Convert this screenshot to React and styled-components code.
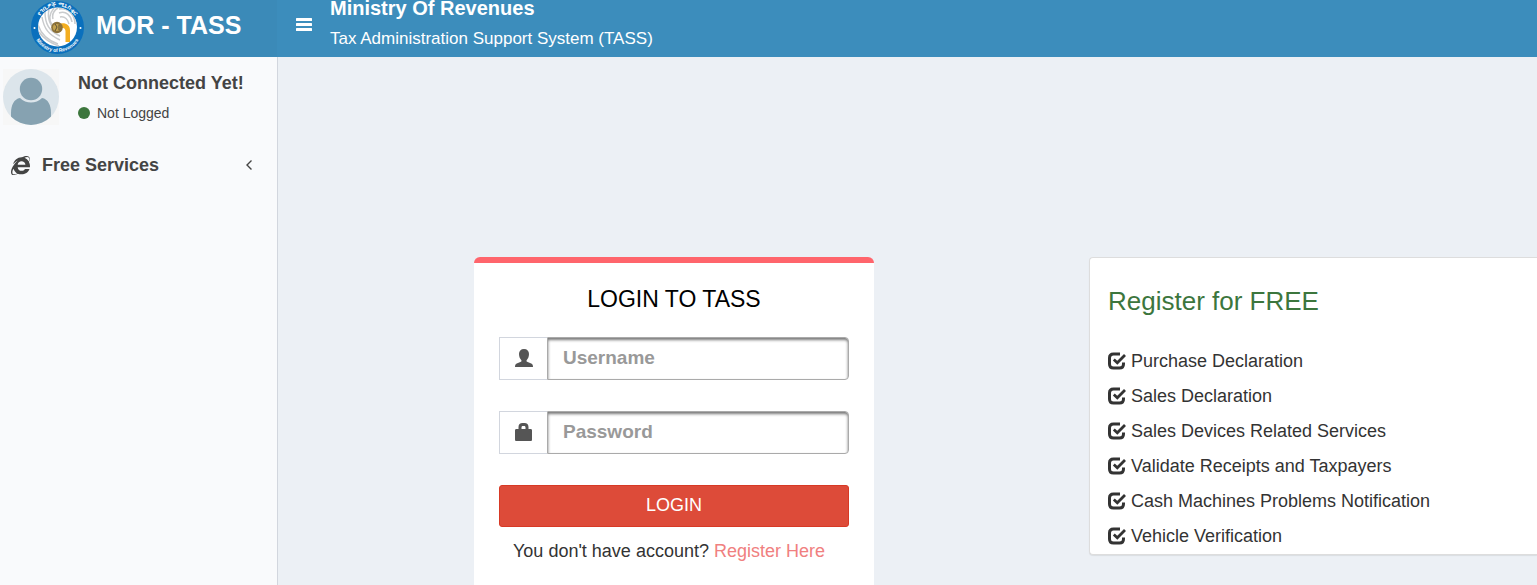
import React from "react";
import styled, { createGlobalStyle } from "styled-components";
import { FaInternetExplorer } from "react-icons/fa";

const GlobalStyle = createGlobalStyle`
  *, *::before, *::after { box-sizing: border-box; }
  body {
    margin: 0;
    font-family: "Liberation Sans", Arial, sans-serif;
    font-size: 18px;
    color: #333;
    background: #ecf0f5;
  }
  h1, h2, p, ul { margin: 0; padding: 0; font-weight: 400; }
  a { text-decoration: none; }
`;

const Page = styled.div`
  display: flex;
  flex-direction: column;
  min-height: 100vh;
`;

const Header = styled.header`
  display: flex;
  height: 57px;
  background: #3c8dbc;
  color: #fff;
`;

const Brand = styled.a`
  display: flex;
  align-items: center;
  gap: 11px;
  flex: 0 0 277px;
  padding: 0 0 3px 30px;
  background: #3b8ab8;
  color: #fff;
  font-size: 25px;
  font-weight: 700;
`;

const BrandName = styled.span`
  padding-bottom: 4px;
`;

const MenuButton = styled.button`
  display: flex;
  align-items: center;
  height: 48px;
  padding: 0 18px 0 19px;
  border: 0;
  background: none;
  color: #fff;
  cursor: pointer;
`;

const Heading = styled.div`
  display: flex;
  flex-direction: column;
  gap: 8px;
`;

const Ministry = styled.h1`
  font-size: 20px;
  line-height: 16px;
  font-weight: 700;
`;

const SystemName = styled.p`
  font-size: 17px;
  line-height: 30px;
`;

const Body = styled.div`
  display: flex;
  flex: 1;
`;

const Sidebar = styled.aside`
  flex: 0 0 278px;
  background: #f9fafc;
  border-right: 1px solid #d2d6de;
  color: #444;
`;

const UserPanel = styled.div`
  display: flex;
  gap: 19px;
  padding: 12px 3px 8px;
`;

const UserName = styled.p`
  font-weight: 700;
  line-height: 28px;
`;

const Status = styled.p`
  display: flex;
  align-items: center;
  gap: 7px;
  font-size: 14px;
  line-height: 32px;

  &::before {
    content: "";
    width: 12px;
    height: 12px;
    border-radius: 50%;
    background: #3c763d;
  }
`;

const MenuItem = styled.a`
  display: flex;
  align-items: center;
  gap: 12px;
  padding: 12px 24px 12px 11px;
  color: #444;
  font-weight: 700;
  line-height: 32px;

  & > span { flex: 1; }
`;

const Main = styled.main`
  flex: 1;
  display: grid;
  grid-template-columns: minmax(0, 1fr) 448px;
  column-gap: 19px;
  align-items: start;
  padding-top: 200px;
`;

const LoginCard = styled.form`
  width: 100%;
  max-width: 400px;
  justify-self: center;
  padding: 20px 25px 32px;
  border-top: 6px solid #ff656c;
  border-radius: 6px;
  background: #fff;
`;

const LoginTitle = styled.h2`
  margin-bottom: 22px;
  font-size: 23px;
  line-height: 32px;
  text-align: center;
  color: #000;
`;

const Field = styled.div`
  display: flex;
  height: 43px;
  margin-bottom: 31px;
`;

const Addon = styled.label`
  display: flex;
  align-items: center;
  justify-content: center;
  flex: 0 0 48px;
  padding-bottom: 2px;
  border: 1px solid #d2d6de;
  border-right: 0;
  color: #555;
`;

const Input = styled.input`
  flex: 1;
  min-width: 0;
  padding: 0 15px 2px;
  border: 1px solid #aaa;
  border-radius: 0 4px 4px 0;
  background: #fff;
  box-shadow: inset 0 2px 3px #777;
  font: 700 19px "Liberation Sans", Arial, sans-serif;
  color: #555;

  &::placeholder { color: #999; opacity: 1; }
`;

const LoginButton = styled.button`
  display: block;
  width: 100%;
  height: 42px;
  padding: 0 0 2px;
  border: 1px solid #d73925;
  border-radius: 3px;
  background: #dd4b39;
  color: #fff;
  font: 400 18px "Liberation Sans", Arial, sans-serif;
  cursor: pointer;
`;

const SignupLine = styled.p`
  padding: 8px 10px 0 0;
  line-height: 32px;
  text-align: center;

  a { color: #f08080; }
`;

const RegisterCard = styled.section`
  padding: 24px 18px 0;
  border: 1px solid #ddd;
  border-right: 0;
  border-radius: 4px 0 0 4px;
  background: #fff;
  box-shadow: 0 1px 1px rgba(0, 0, 0, 0.08);
`;

const RegisterTitle = styled.h2`
  margin-bottom: 24px;
  font-size: 26px;
  line-height: 38px;
  color: #3c763d;
`;

const ServiceList = styled.ul`
  list-style: none;
`;

const Service = styled.li`
  display: flex;
  align-items: center;
  gap: 5px;
  line-height: 35px;

  & > svg { margin-bottom: 2px; }
`;

const Logo = () => (
  <svg width="55" height="55" viewBox="0 0 55 55" aria-hidden="true">
    <defs>
      <path id="ringTop" d="M6.500 27.500a21 21 0 0 1 42 0" />
      <path id="ringBottom" d="M3 27.500a24.500 24.500 0 0 0 49 0" />
      <clipPath id="disc"><circle cx="27.5" cy="27" r="19.5" /></clipPath>
    </defs>
    <circle cx="27.5" cy="27.5" r="26.5" fill="#0a70bd" />
    <circle cx="27.5" cy="27" r="19.5" fill="#fff" />
    <g clipPath="url(#disc)" fill="none" stroke="#c9cbcd" strokeWidth="1.5">
      <path d="M12 17c2 12 7 18 18 23M15 12c0 12 4 19 15 24M19 9c-2 10 1 17 8 22M24 8c-5 6-5 12-2 17" />
      <path d="M8 25c3 9 9 15 20 19M28 8c-5 3-6 7-5 11M29 13c7-3 12 3 13 9M29 9c10-2 16 7 16 15M30 17c5-1 8 3 9 7" />
      <path d="M9 32c5 7 11 11 20 14M33 7c8 2 14 10 14 18" />
    </g>
    <path d="M29 24c5-2 11 0 11 6v12h-4.500V31c0-3-3-4-6.500-3z" fill="#f3ae20" />
    <circle cx="27" cy="27.5" r="5.8" fill="#8b713a" />
    <circle cx="26.5" cy="27.5" r="3.6" fill="#c3a34f" />
    <path d="M25 24l2 3-2 4M29 25v5" stroke="#5d5038" strokeWidth="1" fill="none" />
    <circle cx="4.500" cy="28" r="1" fill="#fff" />
    <circle cx="50.500" cy="28" r="1" fill="#fff" />
    <text fill="#fff" fontSize="6" fontWeight="700" textAnchor="middle">
      <textPath href="#ringTop" startOffset="50%">የገቢዎች ሚኒስቴር</textPath>
    </text>
    <text fill="#fff" fontSize="5" fontWeight="700" textAnchor="middle" fontFamily="Liberation Sans">
      <textPath href="#ringBottom" startOffset="50%">Ministry of Revenues</textPath>
    </text>
  </svg>
);

const BarsIcon = () => (
  <svg width="16" height="13" viewBox="0 0 16 13" fill="currentColor" aria-hidden="true">
    <rect width="16" height="3" rx="0.5" />
    <rect y="5" width="16" height="3" rx="0.5" />
    <rect y="10" width="16" height="3" rx="0.5" />
  </svg>
);

const Avatar = () => (
  <svg width="56" height="56" viewBox="0 0 56 56" aria-hidden="true">
    <defs><clipPath id="avatarDisc"><circle cx="28" cy="28" r="28" /></clipPath></defs>
    <rect width="56" height="56" fill="#f7f7f7" />
    <circle cx="28" cy="28" r="28" fill="#dce5eb" />
    <g clipPath="url(#avatarDisc)" fill="#86a2b1">
      <circle cx="28" cy="20" r="11.2" />
      <path d="M8 56V44c0-8 3-14 9-15 3 3 7 4.500 11 4.500S36 32 39 29c6 1 9 7 9 15v12z" />
    </g>
  </svg>
);

const AngleLeft = () => (
  <svg width="8" height="12" viewBox="0 0 8 12" fill="none" stroke="currentColor" strokeWidth="1.4" aria-hidden="true">
    <path d="M6.500 1.500 2 6l4.500 4.500" />
  </svg>
);

const UserIcon = () => (
  <svg width="18" height="18" viewBox="0 0 18 18" fill="currentColor" aria-hidden="true">
    <path d="M9 0c3.200 0 5 2 5 5 0 2.600-.9 4.600-2.200 5.900-.5.500-.4 1.500.3 1.800l4.100 1.800c1.300.6 1.800 1.500 1.800 3.500H0c0-2 .5-2.900 1.800-3.500l4.100-1.800c.7-.3.800-1.300.3-1.800C4.900 9.600 4 7.600 4 5c0-3 1.800-5 5-5z" />
  </svg>
);

const LockIcon = () => (
  <svg width="18" height="18" viewBox="0 0 18 18" fill="currentColor" aria-hidden="true">
    <path fillRule="evenodd" d="M3.500 6V4c0-2.500 1.500-4 4-4h2c2.500 0 4 1.500 4 4v2H15.500c1 0 1.500.5 1.500 1.500V16.500c0 1-.5 1.500-1.500 1.500h-14C.5 18 0 17.500 0 16.500V7.500C0 6.500.5 6 1.500 6zm3 0h4V4.500C10.500 3.500 10 3 9.200 3H7.800C7 3 6.500 3.500 6.500 4.500z" />
  </svg>
);

const CheckIcon = () => (
  <svg width="18" height="18" viewBox="0 0 18 18" fill="none" stroke="currentColor" aria-hidden="true">
    <path d="M12 2H5.500C3 2 1.500 3.500 1.500 6v6c0 2.500 1.500 4 4 4h6c2.500 0 4-1.500 4-4v-1.500" strokeWidth="3" />
    <path d="M5.800 7.500 9.300 10.700 17 3" strokeWidth="2.800" />
  </svg>
);

const services = [
  "Purchase Declaration",
  "Sales Declaration",
  "Sales Devices Related Services",
  "Validate Receipts and Taxpayers",
  "Cash Machines Problems Notification",
  "Vehicle Verification",
];

export default function App() {
  return (
    <Page>
      <GlobalStyle />
      <Header>
        <Brand href="#"><Logo /><BrandName>MOR - TASS</BrandName></Brand>
        <MenuButton type="button" aria-label="Toggle navigation"><BarsIcon /></MenuButton>
        <Heading>
          <Ministry>Ministry Of Revenues</Ministry>
          <SystemName>Tax Administration Support System (TASS)</SystemName>
        </Heading>
      </Header>
      <Body>
        <Sidebar>
          <UserPanel>
            <Avatar />
            <div>
              <UserName>Not Connected Yet!</UserName>
              <Status>Not Logged</Status>
            </div>
          </UserPanel>
          <nav>
            <MenuItem href="#">
              <FaInternetExplorer size={19} />
              <span>Free Services</span>
              <AngleLeft />
            </MenuItem>
          </nav>
        </Sidebar>
        <Main>
          <LoginCard onSubmit={(e) => e.preventDefault()}>
            <LoginTitle>LOGIN TO TASS</LoginTitle>
            <Field>
              <Addon htmlFor="username" aria-label="Username"><UserIcon /></Addon>
              <Input id="username" type="text" placeholder="Username" />
            </Field>
            <Field>
              <Addon htmlFor="password" aria-label="Password"><LockIcon /></Addon>
              <Input id="password" type="password" placeholder="Password" />
            </Field>
            <LoginButton type="submit">LOGIN</LoginButton>
            <SignupLine>You don't have account? <a href="#">Register Here</a></SignupLine>
          </LoginCard>
          <RegisterCard>
            <RegisterTitle>Register for FREE</RegisterTitle>
            <ServiceList>
              {services.map((name) => (
                <Service key={name}><CheckIcon />{name}</Service>
              ))}
            </ServiceList>
          </RegisterCard>
        </Main>
      </Body>
    </Page>
  );
}
